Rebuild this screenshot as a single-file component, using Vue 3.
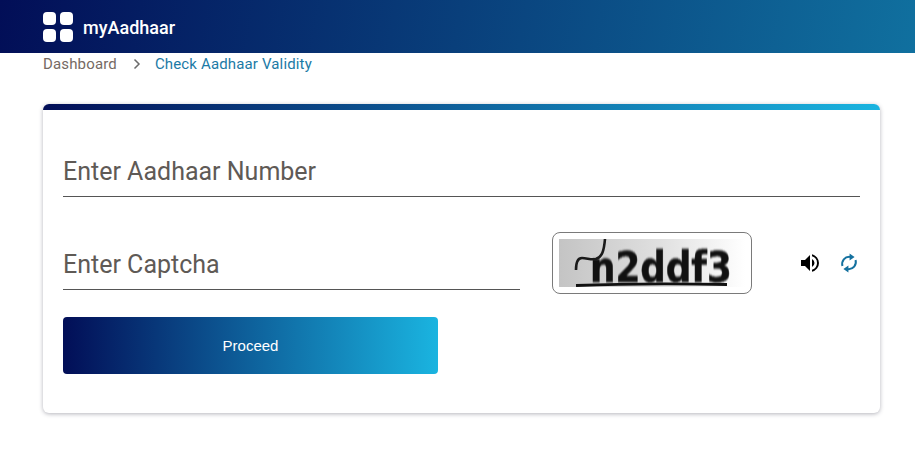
<template>
    <div class="page">
        <header class="topbar">
            <div class="logo">
                <span></span><span></span><span></span><span></span>
            </div>
            <span class="brand">myAadhaar</span>
        </header>

        <nav class="crumbs">
            <span class="crumb">Dashboard</span>
            <svg class="sep" viewBox="0 0 8 12" width="8" height="12">
                <path d="M1.5 1.5 6 6l-4.5 4.5" fill="none" stroke="#6b6b6b" stroke-width="1.5" />
            </svg>
            <span class="crumb current">Check Aadhaar Validity</span>
        </nav>

        <main class="card">
            <div class="card-bar"></div>
            <div class="card-body">
                <div class="field full">Enter Aadhaar Number</div>

                <div class="captcha-row">
                    <div class="field short">Enter Captcha</div>
                    <div class="captcha-box">
                        <div class="captcha-img">
                            <span class="captcha-text">n2ddf3</span>
                            <svg class="captcha-marks" viewBox="0 0 186 48" width="186" height="48">
                                <path d="M17 31c0-8 2-12 6-12 5 0 9 2 14 1 6-2 8-8 9-20" fill="none" stroke="#1a1a1a" stroke-width="2.6" />
                                <path d="M17 46.5c50-2 100-2 151-1" fill="none" stroke="#111" stroke-width="2.8" />
                            </svg>
                        </div>
                    </div>
                    <div class="captcha-actions">
                        <svg viewBox="0 0 24 24" width="24" height="24">
                            <path fill="#000" d="M3 9v6h4l5 5V4L7 9H3zm13.5 3A4.5 4.5 0 0 0 14 7.97v8.05A4.5 4.5 0 0 0 16.5 12zM14 3.23v2.06a7 7 0 0 1 0 13.42v2.06a9 9 0 0 0 0-17.54z" />
                        </svg>
                        <svg viewBox="0 0 24 24" width="24" height="24">
                            <path fill="none" stroke="#14719f" stroke-width="2" d="M5.4 15C4.2 9.8 7.8 5.5 13 5.9" />
                            <path fill="none" stroke="#14719f" stroke-width="2" d="M18.6 9C19.8 14.2 16.2 18.5 11 18.1" />
                            <path fill="#14719f" d="M12.6 2.6v6.8L17.6 6zM11.4 21.4v-6.8L6.4 18z" />
                        </svg>
                    </div>
                </div>

                <button class="proceed" type="button">Proceed</button>
            </div>
        </main>
    </div>
</template>

<script setup>
</script>

<style>
html,
body {
    margin: 0;
    background: #fff;
}
</style>

<style scoped>
.page {
    font-family: Roboto, "Liberation Sans", sans-serif;
    width: 915px;
    height: 449px;
    overflow: hidden;
}

.topbar {
    height: 53px;
    box-sizing: border-box;
    padding: 1px 0 0 43px;
    display: flex;
    align-items: center;
    gap: 10px;
    background: linear-gradient(100deg, #020e57 0%, #10709f 100%);
}

.logo {
    display: grid;
    grid-template-columns: 13px 13px;
    grid-template-rows: 13px 13px;
    gap: 4px;
}

.logo span {
    background: #fff;
    border-radius: 4px;
}

.brand {
    color: #fff;
    font-size: 18px;
    font-weight: 500;
}

.crumbs {
    height: 22px;
    padding-left: 43px;
    display: flex;
    align-items: center;
    font-size: 15px;
    letter-spacing: 0.15px;
    color: #756a64;
}

.sep {
    margin: 0 14px 0 16px;
}

.current {
    color: #1b7aa6;
}

.card {
    margin: 29px 35px 0 43px;
    height: 309px;
    border-radius: 6px;
    overflow: hidden;
    background: #fff;
    box-shadow: 0 1px 4px rgba(40, 40, 60, 0.35);
}

.card-bar {
    height: 6px;
    background: linear-gradient(90deg, #020e57 0%, #1ab4e0 100%);
}

.card-body {
    padding: 0 20px;
}

.field {
    box-sizing: border-box;
    border-bottom: 1px solid #555;
    font-size: 25px;
    color: #5f5a56;
    line-height: 28px;
    padding-bottom: 10px;
}

.full {
    margin-top: 48px;
}

.captcha-row {
    display: flex;
    align-items: flex-start;
    margin-top: 35px;
}

.short {
    flex: none;
    width: 457px;
    margin-top: 19px;
}

.captcha-box {
    flex: none;
    box-sizing: border-box;
    width: 200px;
    height: 62px;
    margin-left: 32px;
    padding: 6px;
    border: 1px solid #7a7a7a;
    border-radius: 8px;
}

.captcha-img {
    position: relative;
    width: 186px;
    height: 48px;
    background: linear-gradient(90deg, #c4c4c4 0%, #e0e0e0 55%, #fff 100%);
}

.captcha-text {
    position: absolute;
    left: 31px;
    top: 8px;
    font-family: "DejaVu Sans", sans-serif;
    font-weight: 700;
    font-size: 42px;
    line-height: 42px;
    color: #111;
    -webkit-text-stroke: 0.6px #111;
    transform: scaleX(0.85);
    transform-origin: left center;
    filter: blur(0.8px);
}

.captcha-marks {
    position: absolute;
    left: 0;
    top: 0;
}

.captcha-actions {
    flex: none;
    display: flex;
    gap: 15px;
    margin: 19px 0 0 46px;
}

.proceed {
    display: block;
    width: 375px;
    height: 57px;
    margin-top: 23px;
    border: 0;
    border-radius: 4px;
    color: #fff;
    font-family: "Liberation Sans", Arial, sans-serif;
    font-size: 15px;
    background: linear-gradient(90deg, #020e57 0%, #1ab4e0 100%);
}
</style>
